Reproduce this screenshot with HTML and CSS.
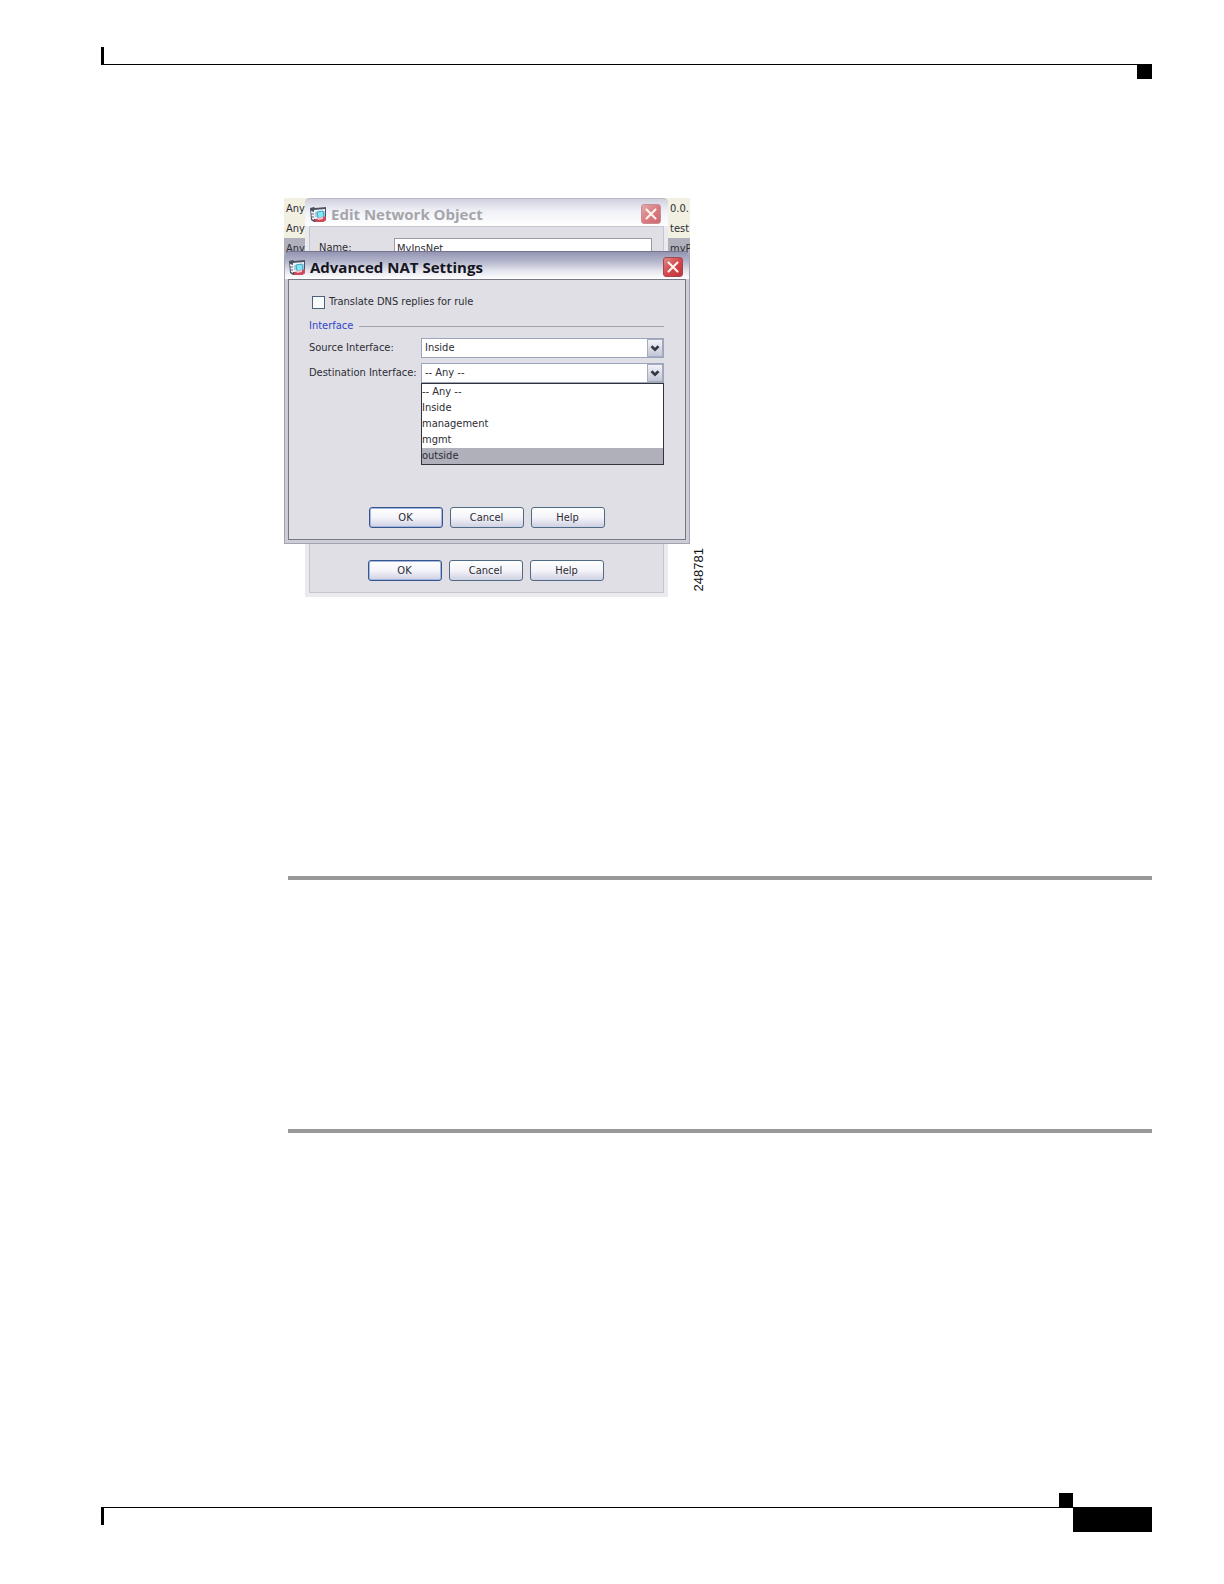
FILE: index.html
```html
<!DOCTYPE html>
<html lang="en">
  <head>
    <meta charset="UTF-8" />
    <meta name="viewport" content="width=device-width, initial-scale=1.0" />
    <title>Advanced NAT Settings</title>
    <link rel="stylesheet" href="styles.css" />
  </head>
  <body>
    <!-- app icon and close cross, shared by both windows -->
    <svg class="sprite" width="0" height="0" aria-hidden="true">
      <symbol id="app-icon" viewBox="0 0 17 17">
        <path d="M0 2l4-1 1 1 11-1v13l-3 2H4l-3-2z" fill="#4a5262" />
        <path d="M1 5l3 1v8l-2-1z" fill="#f4f4f8" />
        <path d="M4 4l11-1v10H4z" fill="#eef3f8" />
        <path d="M1 8h3M1 11h3" stroke="#5a6272" />
        <path d="M5 6l10-1v6H5z" fill="#a9cfe2" />
        <path d="M7 6l6-1 1 6-6 1z" fill="#7fe9f3" stroke="#4aa3c4" />
        <path d="M5 13l6-1 5-2v4l-3 2H5z" fill="#d0485a" />
        <path d="M7 12l6-1v2l-5 1z" fill="#f3c4c8" />
      </symbol>
      <symbol id="cross" viewBox="0 0 20 20">
        <path d="M5 5l10 10M15 5L5 15" stroke="#fff3ec" stroke-width="2.4" stroke-linecap="round" />
      </symbol>
      <symbol id="chevron" viewBox="0 0 16 18">
        <path d="M4 7l4 4 4-4" fill="none" stroke="#343846" stroke-width="3" />
      </symbol>
    </svg>

    <div class="page">
      <header class="page-header">
        <span class="edge"></span>
        <span class="marker"></span>
      </header>

      <main>
        <figure>
          <div class="desktop">
            <div class="rules">
              <div class="rule-row"><span>Any</span><span>0.0.</span></div>
              <div class="rule-row"><span>Any</span><span>test</span></div>
              <div class="rule-row selected"><span>Any</span><span>myP</span></div>
            </div>

            <section class="window edit-window">
              <div class="titlebar">
                <svg class="app-icon"><use href="#app-icon" /></svg>
                <h2>Edit Network Object</h2>
                <button class="close" aria-label="Close"><svg><use href="#cross" /></svg></button>
              </div>
              <form class="panel">
                <div class="name-row">
                  <label for="name">Name:</label>
                  <input type="text" id="name" value="MyInsNet" />
                </div>
                <div class="buttons">
                  <button type="button" class="btn default">OK</button>
                  <button type="button" class="btn">Cancel</button>
                  <button type="button" class="btn">Help</button>
                </div>
              </form>
            </section>

            <section class="window nat-window">
              <div class="titlebar">
                <svg class="app-icon"><use href="#app-icon" /></svg>
                <h2>Advanced NAT Settings</h2>
                <button class="close" aria-label="Close"><svg><use href="#cross" /></svg></button>
              </div>
              <form class="panel">
                <div class="check-row">
                  <input type="checkbox" id="dns" />
                  <label for="dns">Translate DNS replies for rule</label>
                </div>
                <div class="group-title">Interface</div>
                <div class="field">
                  <label for="source">Source Interface:</label>
                  <div class="combo">
                    <select id="source">
                      <option>Inside</option>
                      <option>outside</option>
                    </select>
                    <svg class="arrow"><use href="#chevron" /></svg>
                  </div>
                </div>
                <div class="field">
                  <label for="destination">Destination Interface:</label>
                  <div class="combo">
                    <select id="destination">
                      <option>-- Any --</option>
                      <option>Inside</option>
                      <option>management</option>
                      <option>mgmt</option>
                      <option>outside</option>
                    </select>
                    <svg class="arrow"><use href="#chevron" /></svg>
                    <ul class="list" role="listbox" aria-label="Destination Interface">
                      <li role="option">-- Any --</li>
                      <li role="option">Inside</li>
                      <li role="option">management</li>
                      <li role="option">mgmt</li>
                      <li role="option" aria-selected="true" class="active">outside</li>
                    </ul>
                  </div>
                </div>
                <div class="buttons">
                  <button type="button" class="btn default">OK</button>
                  <button type="button" class="btn">Cancel</button>
                  <button type="button" class="btn">Help</button>
                </div>
              </form>
            </section>
          </div>
          <figcaption>248781</figcaption>
        </figure>
        <hr class="first" />
        <hr class="second" />
      </main>

      <footer class="page-footer">
        <span class="edge"></span>
        <span class="marker"></span>
        <span class="page-number"></span>
      </footer>
    </div>
  </body>
</html>
```
FILE: styles.css
```css
* {
  box-sizing: border-box;
}
body {
  margin: 0;
  background: #fff;
  color: #2c2c34;
  font: 11px/16px "DejaVu Sans Condensed", "Open Sans", sans-serif;
}
.sprite {
  position: absolute;
}
.page {
  display: flex;
  flex-direction: column;
  min-height: 100vh;
  padding: 47px 72px 52px 101px;
}

/* page frame */
.page-header,
.page-footer {
  display: flex;
}
.page-header {
  justify-content: space-between;
  height: 32px;
  background: linear-gradient(#000, #000) 0 17px / 100% 1px no-repeat;
}
.edge {
  width: 3px;
  height: 18px;
  background: #000;
}
.marker {
  width: 15px;
  height: 15px;
  background: #000;
}
.page-header .marker {
  align-self: flex-end;
}
.page-footer {
  height: 39px;
  margin-top: auto;
  background: linear-gradient(#000, #000) 0 14px / 100% 1px no-repeat;
}
.page-footer .edge {
  margin-top: 14px;
}
.page-footer .marker {
  width: 14px;
  margin-left: auto;
}
.page-number {
  width: 79px;
  margin-top: 14px;
  background: #000;
}

main {
  padding: 119px 0 0 183px;
}
hr {
  height: 4px;
  margin: 0 0 0 4px;
  border: 0;
  background: #989898;
}
hr.first {
  margin-top: 279px;
}
hr.second {
  margin-top: 249px;
}
figure {
  display: flex;
  align-items: flex-end;
  gap: 1px;
  margin: 0;
}
figcaption {
  margin-bottom: 6px;
  color: #111;
  font: 13px/16px "Liberation Sans", sans-serif;
  writing-mode: vertical-rl;
  transform: rotate(180deg);
}

/* windows overlap each other on the desktop */
.desktop {
  position: relative;
  width: 406px;
  height: 399px;
}
.rules {
  overflow: hidden;
}
.rule-row {
  display: grid;
  grid-template-columns: 384px 22px;
  height: 20px;
  padding: 3px 0 0 2px;
  overflow: hidden;
  background: #f1f0e1;
  white-space: nowrap;
}
.rule-row.selected {
  background: #b0b0bc;
}
.window {
  position: absolute;
  display: flex;
  flex-direction: column;
}
.edit-window {
  top: 0;
  left: 21px;
  width: 363px;
  height: 399px;
  padding: 0 4px 4px;
  border-radius: 6px 6px 0 0;
  background: #ebebef;
}
.nat-window {
  top: 53px;
  left: 0;
  width: 406px;
  height: 293px;
  padding: 0 3px 3px;
  border: 1px solid #a3a3b0;
  border-top-color: #74748f;
  border-radius: 6px 6px 0 0;
  background: #cdcdd6;
}
.titlebar {
  display: flex;
  align-items: center;
  gap: 4px;
  height: 27px;
  margin: 0 -3px;
  padding: 3px 6px 0 4px;
  border-radius: 5px 5px 0 0;
}
.edit-window .titlebar {
  height: 28px;
  margin: 0 -4px;
  padding: 3px 7px 0 5px;
  border-top: 1px solid #b9b9c9;
  background: linear-gradient(#d0d0de, #f0f1f7 45%, #fff);
}
.nat-window .titlebar {
  background: linear-gradient(#9495b3, #b4b6cc 35%, #e4e5ee 70%, #fff);
}
.app-icon {
  width: 17px;
  height: 17px;
}
h2 {
  margin: 0;
  color: #15151d;
  font: bold 15px/20px "Open Sans", sans-serif;
}
.edit-window h2 {
  color: #a5a5ab;
}
.close {
  width: 20px;
  height: 20px;
  margin-left: auto;
  padding: 0;
  border: 1px solid #a7464e;
  border-radius: 3px;
  background: linear-gradient(135deg, #dc8a88, #d2474c 50%, #c2343c);
}
.close svg {
  display: block;
  width: 18px;
  height: 18px;
}
.edit-window .close {
  border-color: #c98d93;
  background: linear-gradient(135deg, #e3aaab, #d97c7f 50%, #cf6a70);
}
.panel {
  display: flex;
  flex: 1;
  flex-direction: column;
  border: 1px solid #777785;
  background: #dfdfe5;
}
.edit-window .panel {
  padding: 11px 11px 11px 9px;
  border-color: #c6c6ce;
}
.nat-window .panel {
  padding: 14px 21px 11px 20px;
}

/* form controls */
input,
select,
button {
  color: inherit;
  font: inherit;
}
.name-row {
  display: flex;
  gap: 8px;
}
.name-row label {
  width: 67px;
  padding-top: 2px;
}
.name-row input {
  flex: 1;
  min-width: 0;
  height: 20px;
  padding: 0 2px;
  border: 1px solid #9a9aa8;
  background: #fff;
}
.check-row {
  display: flex;
  align-items: center;
  gap: 4px;
}
.check-row input {
  width: 13px;
  height: 13px;
  margin: 0 0 0 3px;
  appearance: none;
  border: 1px solid #4d6277;
  background: #f8fbfb;
}
.group-title {
  display: flex;
  align-items: center;
  gap: 6px;
  margin: 8px 0 4px;
  color: #2f45c8;
}
.group-title::after {
  flex: 1;
  height: 1px;
  background: #a3a3ae;
  content: "";
}
.field {
  display: flex;
  align-items: center;
  height: 20px;
  margin-bottom: 5px;
}
.field label {
  width: 112px;
  white-space: nowrap;
}
.combo {
  position: relative;
  flex: 1;
}
.combo select {
  display: block;
  width: 100%;
  height: 20px;
  padding: 0 3px;
  appearance: none;
  border: 1px solid #9aa6bd;
  border-radius: 0;
  background: #fff;
}
.arrow {
  position: absolute;
  top: 1px;
  right: 1px;
  width: 16px;
  height: 18px;
  border: 1px solid #a5abbc;
  background: linear-gradient(#f2f3f9, #c3c6d6);
  pointer-events: none;
}
.list {
  position: absolute;
  top: 20px;
  left: 0;
  z-index: 1;
  width: 100%;
  margin: 0;
  padding: 0;
  border: 1px solid #33333b;
  background: #fff;
  list-style: none;
}
.list li {
  height: 16px;
}
.list .active {
  background: #b0b0bb;
}
.buttons {
  display: flex;
  justify-content: center;
  gap: 7px;
  margin-top: auto;
}
.btn {
  width: 74px;
  height: 21px;
  padding: 0;
  border: 1px solid #4f6a85;
  border-radius: 3px;
  background: linear-gradient(#fff, #f4f4fa 50%, #cfd0e2);
}
.btn.default {
  border-color: #35558c;
  box-shadow: inset 0 0 0 1px #a3b6e2;
}
```
